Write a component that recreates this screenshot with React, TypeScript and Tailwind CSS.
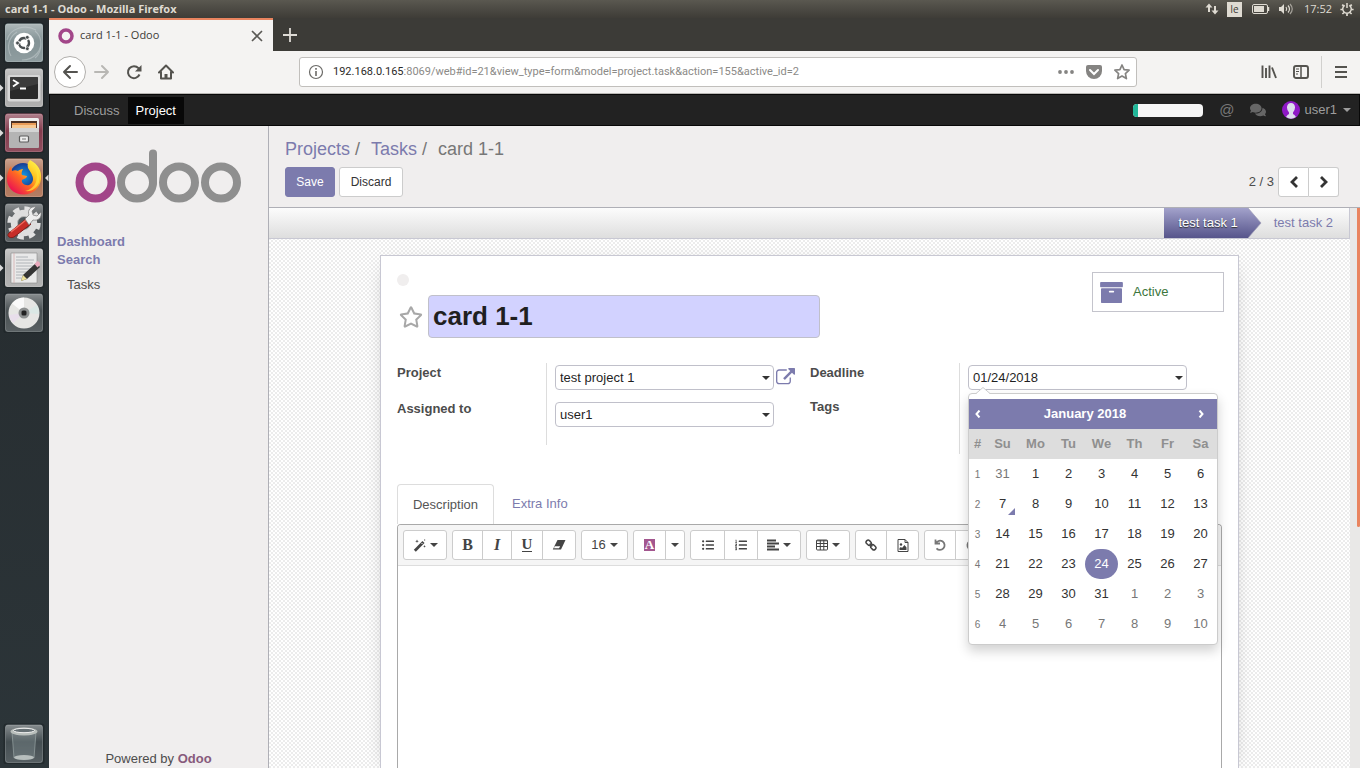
import { useState } from 'react';
import type { ReactNode } from 'react';
import { FaComments, FaListOl, FaListUl, FaRegStar } from 'react-icons/fa';

const tileFill: Record<string, string> = {
  dash: '#7d8d90',
  terminal: '#a3a3a3',
  files: '#7d3144',
  firefox: '#a9694a',
  settings: '#454b4e',
  editor: '#a6a6a6',
  disc: '#3f474a',
  trash: '#3b4549',
};

function Caret({ className = '' }: { className?: string }) {
  return (
    <svg viewBox="0 0 8 4" className={`h-1 w-2 ${className}`} fill="currentColor" aria-hidden="true">
      <path d="M0 0h8L4 4z" />
    </svg>
  );
}

function Chevron({ className = '' }: { className?: string }) {
  return (
    <svg viewBox="0 0 8 12" className={`h-3 w-2 ${className}`} fill="none" stroke="currentColor" strokeWidth="2.800" aria-hidden="true">
      <path d="M7 1 2 6l5 5" />
    </svg>
  );
}

function Tile({ kind, label, running, focused, children }: { kind: string; label: string; running?: boolean; focused?: boolean; children: ReactNode }) {
  return (
    <button aria-label={label} className="block h-[45px] w-full shrink-0">
      <svg viewBox="0 0 49 45" className="block h-[45px] w-[49px]">
        <defs>
          <linearGradient id={`tile-${kind}`} x1="0" y1="0" x2="0" y2="1">
            <stop offset="0" stopColor="#fff" stopOpacity="0.38" />
            <stop offset="0.45" stopColor="#fff" stopOpacity="0.05" />
            <stop offset="1" stopColor="#fff" stopOpacity="0.14" />
          </linearGradient>
        </defs>
        <rect x="3.5" y="4.5" width="41" height="41" rx="3" fill="#1c2326" opacity="0.6" />
        <rect x="5" y="5.500" width="38" height="38.500" rx="2.5" fill={tileFill[kind]} />
        <rect x="5.5" y="6" width="37" height="37.500" rx="2.5" fill={`url(#tile-${kind})`} stroke="#fff" strokeOpacity="0.2" />
        {children}
        {running && <path d="M0 21.5 3.5 25 0 28.5z" fill="#dcdcdc" />}
        {focused && <path d="M48.500 21.500 45 25l3.500 3.500z" fill="#dcdcdc" />}
      </svg>
    </button>
  );
}

function Launcher() {
  return (
    <nav aria-label="Launcher" className="flex w-[49px] shrink-0 flex-col bg-gradient-to-b from-[#24292c] to-[#2c3539]">
      <Tile kind="dash" label="Search your computer">
        <g fill="none" stroke="#c7d0d2" strokeWidth="1.200" opacity="0.5">
          <path d="M7 22C10 10 25 6 36 12M11 38C6 29 9 19 17 14M40 20c4 12-6 22-18 22M35 40C43 33 43 19 35 13" />
        </g>
        <circle cx="24" cy="25" r="10.300" fill="#fff" />
        <circle cx="24" cy="25" r="5" fill="none" stroke="#494f51" strokeWidth="2.400" strokeDasharray="8.900 1.570" strokeDashoffset="4" />
        <g fill="#494f51" stroke="#fff" strokeWidth="0.700">
          <circle cx="17.500" cy="25" r="1.900" />
          <circle cx="27.300" cy="19.300" r="1.900" />
          <circle cx="27.300" cy="30.700" r="1.900" />
        </g>
      </Tile>
      <Tile kind="terminal" label="Terminal" running>
        <rect x="7.500" y="12" width="33" height="26.500" rx="2" fill="#d6d6d6" />
        <rect x="10" y="14" width="28" height="22" rx="1" fill="#292929" />
        <path d="M10 14h28v7L10 28z" fill="#484848" opacity="0.6" />
        <path d="m13 17 5 3-5 3.500M20 25.500h6" fill="none" stroke="#fff" strokeWidth="1.800" />
      </Tile>
      <Tile kind="files" label="Files" running>
        <rect x="9" y="10" width="30" height="13" rx="1.500" fill="#eee" />
        <path d="M11 13h26v9H11z" fill="#4b3023" />
        <path d="M12 15h24v3H12z" fill="#e99b57" />
        <path d="M12 17h24v3H12z" fill="#f6c893" />
        <rect x="9" y="20" width="30" height="20" rx="1" fill="#b4b4b4" />
        <path d="M9 20h30v4H9z" fill="#d4d4d4" />
        <rect x="19.500" y="28" width="9" height="6" rx="1" fill="#ededed" stroke="#5d5d5d" strokeWidth="1.200" />
        <path d="M22 31h4" stroke="#777" />
      </Tile>
      <Tile kind="firefox" label="Firefox" running focused>
        <defs>
          <linearGradient id="fox-body" x1="0.9" y1="0.1" x2="0.2" y2="0.9">
            <stop offset="0" stopColor="#fff44a" />
            <stop offset="0.35" stopColor="#ffc01e" />
            <stop offset="0.6" stopColor="#ff6b22" />
            <stop offset="1" stopColor="#ed174f" />
          </linearGradient>
          <radialGradient id="fox-globe">
            <stop offset="0" stopColor="#159ce8" />
            <stop offset="1" stopColor="#183b91" />
          </radialGradient>
        </defs>
        <circle cx="23" cy="23" r="13" fill="url(#fox-globe)" />
        <path d="M11 13l1 5c2-1 4-1 6 0 1-1 3-2 5-2-1 2-2 4-1 6l5 1c0 2-3 3-5 4-1 3 3 6 7 5 4-2 5-6 3-10-1-3-3-5-4-7-1-4 0-6 2-8 8 4 12 11 11 19-1 9-8 15.500-17 15.500C13 41.500 6.500 34 7 25c0-5 2-9 4-12Z" fill="url(#fox-body)" />
        <path d="M31 9c6 6 7 14 5 20-2 5-6 8-11 9 7 1 12-3 14-9 1-8-2-16-8-20z" fill="#ffe03a" opacity="0.75" />
      </Tile>
      <Tile kind="settings" label="System Settings">
        <circle cx="24" cy="25" r="14.200" fill="none" stroke="#e1e1e1" strokeWidth="5" strokeDasharray="6.200 4.950" />
        <circle cx="24" cy="25" r="9.500" fill="none" stroke="#dedede" strokeWidth="7.500" />
        <circle cx="24" cy="25" r="6.500" fill="#50575b" stroke="#b7b7b7" />
        <path d="M9 35 26 21l5 5-17 13c-4 2-8-1-5-4Z" fill="#c62d28" stroke="#831d19" />
        <path d="m11 34 15-12" stroke="#ef6c5e" strokeWidth="1.500" />
        <path d="m25 21 4-4c-2-5 2-9 7-8l-4 4 1 4 4 1 4-4c1 6-3 9-8 8l-4 5z" fill="#eee" stroke="#777" strokeWidth="0.700" />
      </Tile>
      <Tile kind="editor" label="Text Editor" running>
        <path d="M11 10h26v30H11z" fill="#e9e9e9" stroke="#8b8b8b" strokeWidth="0.600" />
        <path d="M16 14h12M16 17h18M16 20h17M16 23h18M16 26h16M16 29h12M16 32h16M16 35h9" stroke="#a9aeb2" strokeWidth="0.900" />
        <path d="M14 10v30" stroke="#d4a8a8" strokeWidth="0.700" />
        <path d="m21 38 2-6 13-12 4 4-13 12z" fill="#343434" />
        <path d="m34.500 21 3-3q3 1 2.500 4l-2.500 2.500z" fill="#e9a9bc" />
        <path d="m21 38 2-6 4 4z" fill="#ece098" />
      </Tile>
      <Tile kind="disc" label="Disc">
        <circle cx="24" cy="25" r="15.500" fill="#e6e6e4" />
        <path d="M24 25 12 15.500A15.500 15.500 0 0 1 24 9.500Z" fill="#fff" opacity="0.8" />
        <path d="m24 25 13-8a15 15 0 0 1 2 9z" fill="#dbe8e5" />
        <path d="m24 25-11 10a15 15 0 0 1-4-8z" fill="#e8deeb" />
        <circle cx="24" cy="25" r="5.500" fill="#8e9191" />
        <rect x="21.500" y="22.500" width="5" height="5" rx="1.500" fill="#222" />
      </Tile>
      <div className="mt-auto pb-1">
        <Tile kind="trash" label="Trash">
          <path d="m12 12 2 27c3 3 17 3 20 0l2-27z" fill="#89979a" opacity="0.35" />
          <path d="m12 13 2 26m22-26-2 26" stroke="#98a3a4" strokeWidth="0.700" />
          <ellipse cx="24" cy="38.500" rx="10" ry="2.500" fill="#b7bebd" />
          <ellipse cx="24" cy="12.500" rx="13.500" ry="4" fill="#b8bebb" />
          <ellipse cx="24" cy="11.500" rx="10.500" ry="2.200" fill="#667074" stroke="#efefef" />
        </Tile>
      </div>
    </nav>
  );
}

function SystemBar() {
  return (
    <header className="flex h-[18px] shrink-0 items-center bg-gradient-to-b from-[#5a5850] to-[#3e3c37] pr-1.5 pl-[5px] font-['Open_Sans',sans-serif] text-[11px] text-[#dfdbd2]">
      <h1 className="flex-1 font-bold">card 1-1 - Odoo - Mozilla Firefox</h1>
      <div className="flex items-center">
        <svg viewBox="0 0 14 14" className="mr-2 size-3.5" fill="none" stroke="#dfdbd2" strokeWidth="2">
          <path d="M4 10V3M10 4v7" />
          <path d="M.5 5.500 4 1.500l3.500 4zM6.500 8.500l3.500 4 3.500-4z" fill="#dfdbd2" stroke="none" />
        </svg>
        <span className="mr-2.5 flex h-[15px] w-[15px] items-center justify-center bg-[#dfdbd2] text-[10px] text-[#3c3b37]">Ie</span>
        <svg viewBox="0 0 18 10" className="mr-2 h-2.5 w-[18px]">
          <rect x="0.500" y="0.500" width="15" height="9" rx="1.500" fill="none" stroke="#dfdbd2" />
          <rect x="2" y="2" width="10" height="6" fill="#dfdbd2" />
          <path d="M16.500 3v4" stroke="#dfdbd2" strokeWidth="1.500" />
        </svg>
        <svg viewBox="0 0 16 14" className="mr-2.5 h-3.5 w-4" fill="none" stroke="#dfdbd2" strokeWidth="1.200">
          <path d="M1 5h2l3-3v10L3 9H1z" fill="#dfdbd2" stroke="none" />
          <path d="M8 5q1.500 2 0 4M10 3.500q3 3.500 0 7" />
          <path d="M12 2q4.500 5 0 10" opacity="0.6" />
        </svg>
        <span className="mr-2 text-[11px]">17:52</span>
        <svg viewBox="0 0 14 14" className="size-3.5" fill="none" stroke="#dfdbd2" strokeWidth="1.500">
          <path d="M4.700 3.300a4.300 4.300 0 1 0 4.600 0M7 1v5" />
          <path d="M2.200 2.600 3.800 4M.4 7.500h2.200M2.400 12 4 10.500M7 13.900v-2.200M11.600 12 10 10.500M13.600 7.500h-2.200M11.800 2.600 10.200 4" strokeWidth="1.700" />
        </svg>
      </div>
    </header>
  );
}

function Browser() {
  return (
    <div className="shrink-0 font-['Open_Sans',sans-serif]">
      <div className="flex h-[33px] bg-[#3c3b37]">
        <div className="flex w-[224px] items-center border-t-2 border-[#e8845f] bg-[#f4f3f2] pr-2.5 pl-2">
          <svg viewBox="0 0 18 18" className="size-[18px]">
            <circle cx="9" cy="9" r="6" fill="none" stroke="#a24689" strokeWidth="3.500" />
          </svg>
          <span className="ml-[5px] flex-1 text-[11px] text-[#3c3b37]">card 1-1 - Odoo</span>
          <button aria-label="Close tab">
            <svg viewBox="0 0 12 12" className="size-3" stroke="#5a5955" strokeWidth="1.600">
              <path d="m1 1 10 10M11 1 1 11" />
            </svg>
          </button>
        </div>
        <button aria-label="New tab" className="px-2.5">
          <svg viewBox="0 0 14 14" className="size-3.5" stroke="#dedbd5" strokeWidth="1.800">
            <path d="M7 0v14M0 7h14" />
          </svg>
        </button>
      </div>
      <div className="flex h-[43px] items-center border-b border-[#b9b7b4] bg-[#f4f3f2] pr-3 pl-[5px] text-[#54534f]">
        <button aria-label="Back" className="flex size-8 items-center justify-center rounded-full border border-[#b1afac] bg-white">
          <svg viewBox="0 0 16 16" className="size-4" fill="none" stroke="currentColor" strokeWidth="2" strokeLinecap="round" strokeLinejoin="round">
            <path d="M15 8H2M8 2 2 8l6 6" />
          </svg>
        </button>
        <button aria-label="Forward" className="ml-2 text-[#b8b7b4]">
          <svg viewBox="0 0 16 16" className="size-4" fill="none" stroke="currentColor" strokeWidth="2" strokeLinecap="round" strokeLinejoin="round">
            <path d="M1 8h13M8 2l6 6-6 6" />
          </svg>
        </button>
        <button aria-label="Reload" className="ml-4">
          <svg viewBox="0 0 16 16" className="size-4" fill="none" stroke="currentColor" strokeWidth="2">
            <path d="M13.500 10.500A6 6 0 1 1 12.500 4.200L14 6" />
            <path d="M15.500 1v6.500H9z" fill="currentColor" stroke="none" />
          </svg>
        </button>
        <button aria-label="Home" className="ml-4">
          <svg viewBox="0 0 16 16" className="size-4" fill="none" stroke="currentColor" strokeWidth="2" strokeLinejoin="round" strokeLinecap="round">
            <path d="m1 8.500 7-7 7 7M3 8v6.500h10V8" />
            <path d="M8 14v-4" strokeWidth="3" strokeLinecap="butt" />
          </svg>
        </button>
        <div className="ml-[125px] flex h-[30px] max-w-[838px] flex-1 items-center rounded-[3px] border border-[#c1bfbc] bg-white pr-1.5 pl-2">
          <svg viewBox="0 0 16 16" className="size-4 shrink-0" fill="none" stroke="#6b6a67">
            <circle cx="8" cy="8" r="6.500" strokeWidth="1.200" />
            <path d="M8 7v5M8 4v1.800" strokeWidth="1.600" />
          </svg>
          <a href="#address" className="ml-[9px] flex-1 overflow-hidden font-['Roboto',sans-serif] text-[11px] whitespace-nowrap text-[#8b8a87]">
            <span className="text-[#2b2a28]">192.168.0.165</span>:8069/web#id=21&amp;view_type=form&amp;model=project.task&amp;action=155&amp;active_id=2
          </a>
          <div className="flex shrink-0 items-center gap-3 text-[#858482]">
            <button aria-label="Page actions">
              <svg viewBox="0 0 16 16" className="size-4" fill="currentColor">
                <circle cx="2" cy="8" r="1.900" />
                <circle cx="8" cy="8" r="1.900" />
                <circle cx="14" cy="8" r="1.900" />
              </svg>
            </button>
            <button aria-label="Save to Pocket">
              <svg viewBox="0 0 16 16" className="size-4">
                <path d="M2 1h12q2 0 2 2v4a8 8 0 0 1-16 0V3q0-2 2-2Z" fill="currentColor" />
                <path d="m4 6 4 4 4-4" fill="none" stroke="#fff" strokeWidth="2" strokeLinecap="round" />
              </svg>
            </button>
            <button aria-label="Bookmark">
              <svg viewBox="0 0 16 16" className="size-4" fill="none" stroke="currentColor" strokeWidth="1.700" strokeLinejoin="round">
                <path d="m8 1 2.100 4.600 5 .6-3.700 3.400 1 5L8 12.100 3.600 14.600l1-5L.9 6.200l5-.6z" />
              </svg>
            </button>
          </div>
        </div>
        <div className="ml-auto flex h-8 items-center">
          <button aria-label="Library" className="mr-4">
            <svg viewBox="0 0 16 16" className="size-4" stroke="currentColor" strokeWidth="1.900">
              <path d="M1.500 1.500v12.500M5 4v10M8.500 1.500v12.500M11 3.500l4 10.500" />
            </svg>
          </button>
          <button aria-label="Sidebars" className="mr-3">
            <svg viewBox="0 0 16 16" className="size-4" fill="none" stroke="currentColor">
              <rect x="1" y="2" width="14" height="12" rx="2" strokeWidth="1.900" />
              <path d="M8 2v12" strokeWidth="1.500" />
              <path d="M3 5h3M3 7.500h3M3 10h2" />
            </svg>
          </button>
          <div className="flex h-full items-center border-l border-[#d1d0ce] pl-3">
            <button aria-label="Open menu">
              <svg viewBox="0 0 14 14" className="size-3.5" stroke="currentColor" strokeWidth="1.900">
                <path d="M1 2h12M1 7h12M1 12h12" />
              </svg>
            </button>
          </div>
        </div>
      </div>
    </div>
  );
}

function AppBar() {
  return (
    <nav className="flex h-8 shrink-0 items-center border border-[#080808] bg-[#222] pr-2 pl-4 text-[#9d9d9d]">
      <a href="#discuss" className="px-2 pt-px leading-[26px]">Discuss</a>
      <a href="#project" className="bg-[#080808] px-2 pt-px leading-[26px] text-white">Project</a>
      <div className="ml-auto flex items-center">
        <div className="mr-4 flex h-[13px] w-[70px] overflow-hidden rounded bg-[#f5f5f5]">
          <div className="w-[5px] bg-[#21b799]" />
        </div>
        <a href="#mentions" aria-label="Mentions" className="mr-4 text-[15px] leading-5 text-[#777]">@</a>
        <a href="#chat" aria-label="Conversations" className="mr-4 text-[#666]"><FaComments className="size-4" /></a>
        <button className="flex items-center">
          <svg viewBox="0 0 18 18" className="mr-1 size-[18px]">
            <circle cx="9" cy="9" r="9" fill="#8f18c6" />
            <path d="M4 16q1.500-2.500 3-3V11.500Q4.800 9 5 6 5.500 2 9 2t4 4Q13.200 9 11 11.500V13q1.500.5 3 3-5 3.500-10 0Z" fill="#dcdcec" />
          </svg>
          user1
          <Caret className="ml-1.5" />
        </button>
      </div>
    </nav>
  );
}

function Sidebar() {
  return (
    <aside className="flex w-[220px] shrink-0 flex-col border-r border-[#afafb6] bg-[#f0eeee]">
      <svg viewBox="0 0 168 54" className="mt-[23px] ml-[25px] h-[54px] w-[168px]" fill="none" strokeWidth="8" role="img" aria-label="Odoo">
        <circle cx="21.500" cy="33.500" r="16" stroke="#a24689" />
        <g stroke="#8f8f8f">
          <circle cx="63" cy="33.500" r="16" />
          <circle cx="105" cy="33.500" r="16" />
          <circle cx="147" cy="33.500" r="16" />
          <path d="M79 33.500V4.500" strokeLinecap="round" />
        </g>
      </svg>
      <div className="mt-[30px] pl-2 leading-[18px]">
        <a href="#dashboard" className="block font-bold text-[#7c7bad]">Dashboard</a>
        <a href="#search" className="block font-bold text-[#7c7bad]">Search</a>
        <a href="#tasks" className="mt-[7px] ml-2.5 block text-[#4c4c4c]">Tasks</a>
      </div>
      <footer className="mt-auto text-center leading-[18px] text-[#4c4c4c]">
        Powered by <a href="#odoo" className="font-bold text-[#875a7b]">Odoo</a>
      </footer>
    </aside>
  );
}

function ControlPanel() {
  return (
    <div className="h-[82px] shrink-0 border-b border-[#afafb6] bg-[#f0eeee] px-4 pt-3">
      <div className="text-[18px] leading-[22px] text-[#777]">
        <a href="#projects" className="text-[#7c7bad]">Projects</a>
        <span className="mr-[11px] ml-[5px]">/</span>
        <a href="#task-list" className="text-[#7c7bad]">Tasks</a>
        <span className="mr-[11px] ml-[5px]">/</span>
        <span>card 1-1</span>
      </div>
      <div className="mt-[7px] flex items-center gap-1 pr-[5px] text-[12px]">
        <button className="h-[30px] w-[50px] rounded-[3px] border border-[#7c7bad] bg-[#7c7bad] text-white">Save</button>
        <button className="h-[30px] w-16 rounded-[3px] border border-[#ccc] bg-white text-[#333]">Discard</button>
        <span className="ml-auto text-[13px] text-[#4c4c4c]">2 / 3</span>
        <div className="flex h-[30px] text-[#333]">
          <button aria-label="Previous record" className="flex w-[31px] items-center justify-center rounded-l-[3px] border border-[#ccc] bg-white"><Chevron /></button>
          <button aria-label="Next record" className="flex w-[30px] items-center justify-center rounded-r-[3px] border border-l-0 border-[#ccc] bg-white"><Chevron className="-scale-x-100" /></button>
        </div>
      </div>
    </div>
  );
}

function StatusBar() {
  return (
    <div className="flex h-[31px] shrink-0 justify-end border-r border-b border-[#c8c8d3] bg-gradient-to-b from-[#fcfcfc] to-[#dedede]">
      <button className="flex text-white">
        <span className="flex h-full items-center bg-gradient-to-b from-[#a3a2cb] to-[#57558b] pr-2.5 pl-[15px] [text-shadow:0_1px_1px_#333]">test task 1</span>
        <svg viewBox="0 0 14 30" preserveAspectRatio="none" className="h-full w-3.5">
          <defs>
            <linearGradient id="stage" x1="0" y1="0" x2="0" y2="1">
              <stop offset="0" stopColor="#a3a2cb" />
              <stop offset="1" stopColor="#57558b" />
            </linearGradient>
          </defs>
          <path d="M0 0 13 15 0 30z" fill="url(#stage)" />
          <path d="m0 0 13 15L0 30" fill="none" stroke="#9c9bb5" strokeWidth="0.700" />
        </svg>
      </button>
      <button className="pr-4 pl-3 text-[#7c7bad]">test task 2</button>
    </div>
  );
}

const caret = 'pointer-events-none absolute top-[11px] right-1 text-[#333]';
const field = 'h-[25px] w-full appearance-none rounded-[4px] border border-[#c0c0ca] bg-white px-1 text-[13px] text-[#1f1f1f]';

function Picker({ id, value }: { id: string; value: string }) {
  return (
    <div className="relative w-[219px]">
      <select id={id} className={field}>
        <option>{value}</option>
      </select>
      <Caret className={caret} />
    </div>
  );
}

const weeks = [
  [31, 1, 2, 3, 4, 5, 6],
  [7, 8, 9, 10, 11, 12, 13],
  [14, 15, 16, 17, 18, 19, 20],
  [21, 22, 23, 24, 25, 26, 27],
  [28, 29, 30, 31, 1, 2, 3],
  [4, 5, 6, 7, 8, 9, 10],
];

function Day({ day, week }: { day: number; week: number }) {
  const outside = (week === 0 && day > 7) || (week > 3 && day < 15);
  const selected = week === 3 && day === 24;
  const today = week === 1 && day === 7;
  return (
    <td className="relative p-0">
      <button className={`block h-[30px] w-full ${selected ? 'rounded-full bg-[#7c7bad] text-white' : outside ? 'text-[#777]' : 'text-[#333]'}`}>{day}</button>
      {today && <span className="absolute right-1 bottom-1 border-b-[7px] border-l-[7px] border-b-[#7c7bad] border-l-transparent" />}
    </td>
  );
}

function Calendar() {
  return (
    <div className="absolute top-[28px] left-0 z-10 w-[250px] rounded-[4px] border border-[#ccc] bg-white py-[5px] shadow-[0_6px_12px_rgba(0,0,0,0.18)]">
      <svg viewBox="0 0 14 7" className="absolute -top-[7px] left-[7px] h-[7px] w-3.5">
        <path d="M0 7 7 0l7 7z" fill="#fff" />
        <path d="M0 6.500 7 .5l7 6" fill="none" stroke="#ccc" />
      </svg>
      <table className="w-full table-fixed border-collapse text-center text-[13px]">
        <colgroup>
          <col className="w-[17px]" />
          <col /><col /><col /><col /><col /><col /><col />
        </colgroup>
        <thead>
          <tr className="h-[30px] bg-[#7c7bad] text-white">
            <th className="p-0"><button aria-label="Previous month" className="block h-[30px] w-full"><svg viewBox="0 0 6 8" className="mx-auto h-2 w-1.5" fill="none" stroke="currentColor" strokeWidth="2"><path d="M4.500 0.500 1.500 4l3 3.500" /></svg></button></th>
            <th className="p-0" colSpan={6}>January 2018</th>
            <th className="p-0"><button aria-label="Next month" className="block h-[30px] w-full"><svg viewBox="0 0 6 8" className="mx-auto h-2 w-1.5" fill="none" stroke="currentColor" strokeWidth="2"><path d="m1.500 0.500 3 3.500-3 3.500" /></svg></button></th>
          </tr>
          <tr className="h-[30px] bg-[#ddd] text-[#8f8f8f]">
            {['#', 'Su', 'Mo', 'Tu', 'We', 'Th', 'Fr', 'Sa'].map((d) => <th key={d} className="p-0">{d}</th>)}
          </tr>
        </thead>
        <tbody>
          {weeks.map((days, week) => (
            <tr key={week} className="h-[30px]">
              <td className="p-0 text-[10px] text-[#777]">{week + 1}</td>
              {days.map((day) => <Day key={day} day={day} week={week} />)}
            </tr>
          ))}
        </tbody>
      </table>
    </div>
  );
}

function Tool({ label, className, children }: { label: string; className: string; children: ReactNode }) {
  return <button aria-label={label} className={`flex h-7 items-center justify-center ${className}`}>{children}</button>;
}

function ToolGroup({ children, className = '' }: { children: ReactNode; className?: string }) {
  return <div className={`flex shrink-0 divide-x divide-[#ccc] overflow-hidden rounded-[3px] border border-[#ccc] bg-white ${className}`}>{children}</div>;
}

function Undo({ className = '' }: { className?: string }) {
  return (
    <svg viewBox="0 0 14 14" className={`size-3.5 ${className}`} fill="none" stroke="currentColor" strokeWidth="1.800">
      <path d="M2.500 1.500v4H7M3 5A4.600 4.600 0 1 1 3.500 10.300" />
    </svg>
  );
}

const glyph = "font-['Liberation_Serif',serif] text-[16px] font-bold";

function Toolbar() {
  return (
    <div role="toolbar" aria-label="Formatting" className="flex gap-[5px] overflow-hidden rounded-t-[3px] border-b border-[#ddd] bg-[#f5f5f5] px-[5px] py-[5px] text-[#444]">
      <ToolGroup>
        <Tool label="Style" className="w-[42px] gap-1">
          <svg viewBox="0 0 13 13" className="size-[13px]" fill="currentColor">
            <path d="M.8 10.800 9.500 2l2 2-8.700 8.800z" />
            <path d="m8.500 4 1 1" stroke="#fff" />
            <path d="M4 .5l.5 1.300 1.300.5-1.300.5L4 4l-.5-1.200-1.300-.5 1.300-.5zM11.500 6l.4 1 1 .4-1 .4-.4 1-.4-1-1-.4 1-.4zM11.700 0l.3.7.7.3-.7.3-.3.700-.300-.700-.700-.300.700-.300z" />
          </svg>
          <Caret />
        </Tool>
      </ToolGroup>
      <ToolGroup>
        <Tool label="Bold" className="w-[30px]"><span className={glyph}>B</span></Tool>
        <Tool label="Italic" className="w-[29px]"><span className={`${glyph} italic`}>I</span></Tool>
        <Tool label="Underline" className="w-[31px]"><span className="border-b border-current font-['Liberation_Serif',serif] text-[15px] leading-[13px] font-bold">U</span></Tool>
        <Tool label="Remove formatting" className="w-8">
          <svg viewBox="0 0 14 12" className="h-3 w-3.5">
            <path d="M5.500 1h8L9 10.500H.8z" fill="currentColor" />
            <path d="M2.700 7.200h5.500L7 9.300H2z" fill="#fff" />
          </svg>
        </Tool>
      </ToolGroup>
      <ToolGroup>
        <Tool label="Font size" className="w-[45px] gap-1"><span className="text-[13px]">16</span><Caret /></Tool>
      </ToolGroup>
      <ToolGroup>
        <Tool label="Font colour" className="w-8"><span className="bg-[#a3568f] px-px font-['Liberation_Serif',serif] text-[13px] leading-3 font-bold text-white">A</span></Tool>
        <Tool label="More colours" className="w-[18px]"><Caret /></Tool>
      </ToolGroup>
      <ToolGroup>
        <Tool label="Bulleted list" className="w-[34px]"><FaListUl className="size-3" /></Tool>
        <Tool label="Numbered list" className="w-[33px]"><FaListOl className="size-3" /></Tool>
        <Tool label="Paragraph" className="w-[42px] gap-1">
          <svg viewBox="0 0 12 12" className="size-3" stroke="currentColor" strokeWidth="1.900">
            <path d="M0 1.500h9M0 4.500h12M0 7.500h8M0 10.500h12" />
          </svg>
          <Caret />
        </Tool>
      </ToolGroup>
      <ToolGroup>
        <Tool label="Table" className="w-[42px] gap-1">
          <svg viewBox="0 0 12 12" className="size-3" fill="none" stroke="currentColor">
            <rect x="0.500" y="1" width="11" height="10" rx="1" />
            <path d="M.5 1.800h11M.5 4.500h11M.5 7.500h11M4.300 1v10M7.800 1v10" />
          </svg>
          <Caret />
        </Tool>
      </ToolGroup>
      <ToolGroup>
        <Tool label="Link" className="w-[31px]">
          <svg viewBox="0 0 13 13" className="size-3" fill="none" stroke="currentColor" strokeWidth="1.600">
            <rect x="1" y="1.800" width="6" height="4.400" rx="2" transform="rotate(45 4 4)" />
            <rect x="6" y="6.800" width="6" height="4.400" rx="2" transform="rotate(45 9 9)" />
            <path d="m5 5 3 3" />
          </svg>
        </Tool>
        <Tool label="Picture" className="w-[31px]">
          <svg viewBox="0 0 12 13" className="h-[13px] w-3" fill="none" stroke="currentColor">
            <path d="M1 .500h7L11 3.500v9H1zM8 .5v3h3" />
            <path d="M2.500 11V9l1.500-1 1 1 2.500-3L9.500 8.500V11z" fill="currentColor" stroke="none" />
            <circle cx="4" cy="5.500" r="1.200" fill="currentColor" stroke="none" />
          </svg>
        </Tool>
      </ToolGroup>
      <ToolGroup className="text-[#777]">
        <Tool label="Undo" className="w-[31px]"><Undo /></Tool>
        <Tool label="Redo" className="w-[31px]"><Undo className="-scale-x-100" /></Tool>
      </ToolGroup>
    </div>
  );
}

function Sheet() {
  const [title, setTitle] = useState('card 1-1');
  const [deadline, setDeadline] = useState('01/24/2018');
  return (
    <div className="mx-auto mt-4 flex w-full max-w-[859px] flex-1 flex-col border border-b-0 border-[#c8c8d3] bg-white px-4 pt-4 shadow-[0_5px_20px_-10px_rgba(0,0,0,0.4)]">
      <div className="flex items-start justify-between">
        <div className="pt-0.5">
          <button aria-label="Task state" className="block size-3 rounded-full bg-[#f0eeee]" />
          <div className="mt-[9px] flex items-center gap-1">
            <button aria-label="Priority" className="flex w-[27px] justify-center text-[#a8a8a8]"><FaRegStar className="size-6" /></button>
            <input aria-label="Task title" value={title} onChange={(e) => setTitle(e.target.value)} className="h-[43px] w-[392px] rounded-[4px] border border-[#c0c0ca] bg-[#d2d2ff] px-1 text-[26px] font-bold text-[#1f1f1f]" />
          </div>
        </div>
        <button className="-mr-0.5 flex h-10 w-[132px] items-center border border-[#c4c4cc] px-[7px] text-[#3c763d]">
          <svg viewBox="64 128 1664 1536" className="mr-2.5 h-[21px] w-[23px]" fill="#7c7bad">
            <path d="M1088 832q0-26-19-45t-45-19h-256q-26 0-45 19t-19 45 19 45 45 19h256q26 0 45-19t19-45zm576-192v960q0 26-19 45t-45 19h-1408q-26 0-45-19t-19-45v-960q0-26 19-45t45-19h1408q26 0 45 19t19 45zm64-448v256q0 26-19 45t-45 19h-1536q-26 0-45-19t-19-45v-256q0-26 19-45t45-19h1536q26 0 45 19t19 45z" />
          </svg>
          Active
        </button>
      </div>

      <div className="mt-[25px] grid grid-cols-[413px_1fr] items-start text-[#4c4c4c]">
        <div className="flex">
          <div className="flex h-[82px] w-[150px] shrink-0 flex-col border-r border-[#ddd] font-bold">
            <label htmlFor="project" className="leading-[19px]">Project</label>
            <label htmlFor="assignee" className="mt-[17px] leading-[19px]">Assigned to</label>
          </div>
          <div className="flex flex-col gap-3 pt-0.5 pl-2">
            <div className="flex h-[25px] items-center gap-0.5">
              <Picker id="project" value="test project 1" />
              <button aria-label="Open project" className="text-[#7c7bad]">
                <svg viewBox="0 0 1792 1792" className="size-[19px]" fill="currentColor">
                  <path d="M1408 928v320q0 119-84.500 203.500t-203.500 84.500h-832q-119 0-203.500-84.500t-84.500-203.500v-832q0-119 84.500-203.500t203.500-84.500h704q14 0 23 9t9 23v64q0 14-9 23t-23 9h-704q-66 0-113 47t-47 113v832q0 66 47 113t113 47h832q66 0 113-47t47-113v-320q0-14 9-23t23-9h64q14 0 23 9t9 23zm384-864v512q0 26-19 45t-45 19-45-19l-176-176-652 652q-10 10-23 10t-23-10l-114-114q-10-10-10-23t10-23l652-652-176-176q-19-19-19-45t19-45 45-19h512q26 0 45 19t19 45z" />
                </svg>
              </button>
            </div>
            <Picker id="assignee" value="user1" />
          </div>
        </div>
        <div className="flex">
          <div className="flex h-[91px] w-[150px] shrink-0 flex-col border-r border-[#ddd] font-bold">
            <label htmlFor="deadline" className="leading-[19px]">Deadline</label>
            <label htmlFor="tags" className="mt-[15px] leading-[19px]">Tags</label>
          </div>
          <div className="relative mt-0.5 ml-2 w-[219px]">
            <div className="relative">
              <input id="deadline" value={deadline} onChange={(e) => setDeadline(e.target.value)} className={field} />
              <Caret className={caret} />
            </div>
            <input id="tags" className={`${field} mt-[31px]`} />
            <Calendar />
          </div>
        </div>
      </div>

      <div role="tablist" className="mt-[30px] flex">
        <button role="tab" aria-selected="true" className="h-10 w-[97px] rounded-t-[4px] border border-b-0 border-[#ddd] text-[#555]">Description</button>
        <button role="tab" aria-selected="false" className="h-10 px-[18px] text-[#7c7bad]">Extra Info</button>
      </div>
      <div className="flex flex-1 flex-col rounded-t-[4px] border border-b-0 border-[#a9a9a9]">
        <Toolbar />
        <textarea aria-label="Description" className="min-h-[202px] w-full flex-1 resize-none p-2 outline-none" />
      </div>
    </div>
  );
}

export default function App() {
  return (
    <div className="flex h-screen flex-col overflow-hidden bg-white">
      <SystemBar />
      <div className="flex min-h-0 flex-1">
        <Launcher />
        <div className="flex min-w-0 flex-1 flex-col">
          <Browser />
          <div className="flex min-h-0 flex-1 flex-col font-['Liberation_Sans',Arial,sans-serif] text-[13px]">
            <AppBar />
            <div className="flex min-h-0 flex-1">
              <Sidebar />
              <main className="flex min-w-0 flex-1 flex-col">
                <ControlPanel />
                <div className="flex min-h-0 flex-1">
                  <div className="flex min-w-0 flex-1 flex-col overflow-hidden bg-[repeating-conic-gradient(#ececec_0_25%,#ffffff_0_50%)] bg-[length:4px_4px]">
                    <StatusBar />
                    <Sheet />
                  </div>
                  <div className="flex w-2.5 shrink-0 items-start justify-end bg-[#e9e8e7]">
                    <div className="h-[57%] w-[3px] rounded-b bg-[#e9845f]" />
                  </div>
                </div>
              </main>
            </div>
          </div>
        </div>
      </div>
    </div>
  );
}
